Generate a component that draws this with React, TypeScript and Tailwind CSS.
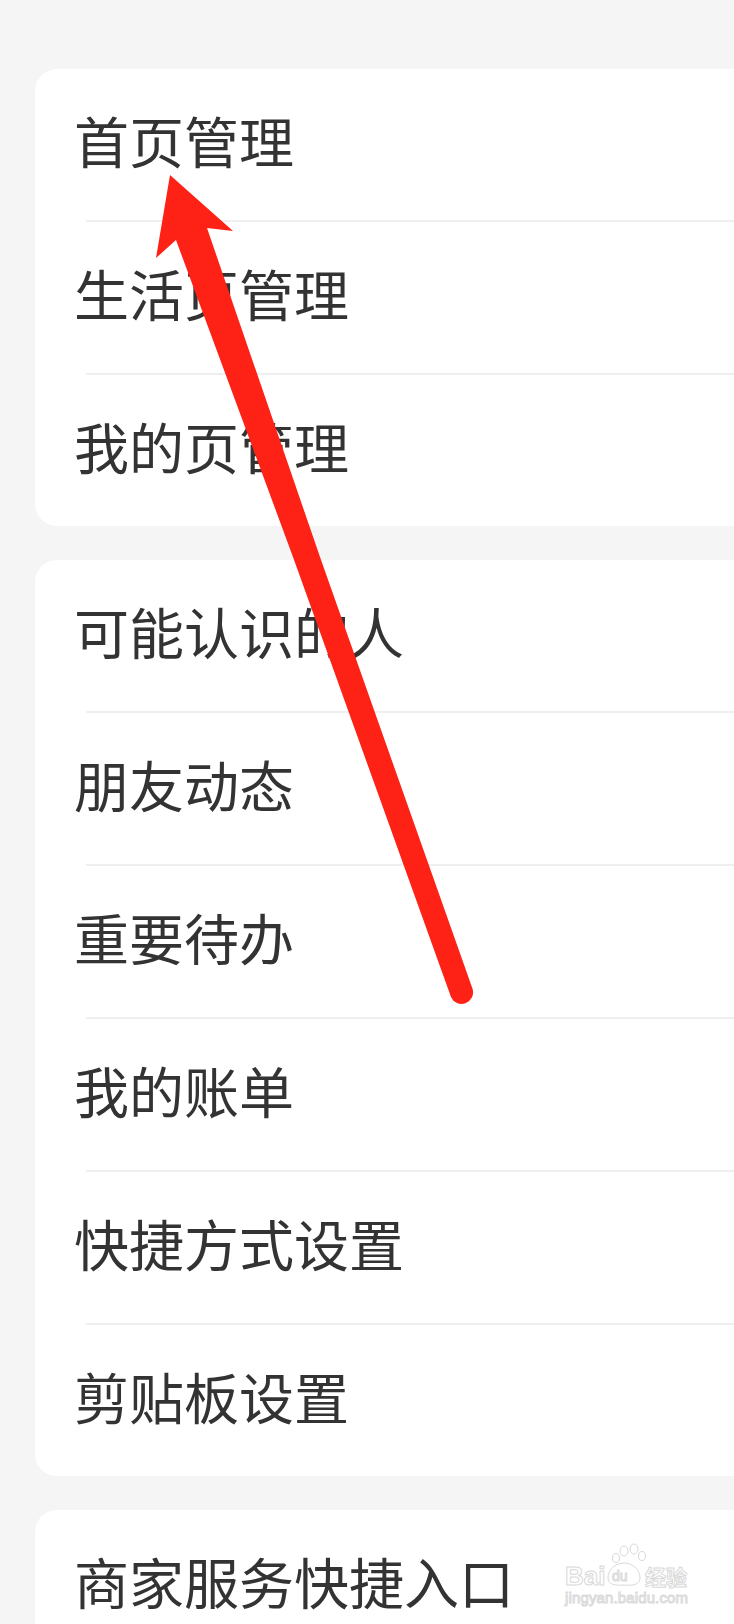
import React from 'react';

const cards: string[][] = [
  ['首页管理', '生活页管理', '我的页管理'],
  ['可能认识的人', '朋友动态', '重要待办', '我的账单', '快捷方式设置', '剪贴板设置'],
  ['商家服务快捷入口'],
];

const font = '"Noto Sans CJK SC", "Noto Sans", sans-serif';

const Row: React.FC<{ label: string; last: boolean }> = ({ label, last }) => {
  return (
    <>
      <div className="h-[151px] flex items-center pl-[39px] pb-[10px]">
        <span className="text-[55px] leading-none text-[#333333]">{label}</span>
      </div>
      {!last ? <div className="ml-[51px] h-[2px] bg-[#efefef]"></div> : null}
    </>
  );
};

const Watermark = () => {
  return (
    <svg
      className="absolute left-[555px] top-[1538px]"
      width="150"
      height="72"
      viewBox="0 0 150 72"
      fill="#ffffff"
      stroke="#d9d9d9"
      strokeWidth="1"
      aria-hidden="true"
    >
      <text x="10" y="47" fontSize="26" fontFamily="Liberation Sans, sans-serif" fontWeight="700">
        Bai
      </text>
      <ellipse cx="61" cy="20" rx="3.5" ry="4.5" />
      <ellipse cx="69" cy="13" rx="4" ry="5" />
      <ellipse cx="79" cy="11" rx="4" ry="5" />
      <ellipse cx="87" cy="18" rx="3.5" ry="4.5" />
      <path d="M53 40 C53 30 62 25 69 25 C77 25 85 31 85 40 C85 46 79 48 69 47 C59 48 53 46 53 40 Z" />
      <text x="57" y="43" fontSize="14" fontFamily="Liberation Sans, sans-serif">
        du
      </text>
      <text x="90" y="47" fontSize="21" fontFamily='"Noto Sans CJK SC", sans-serif' fontWeight="700">
        经验
      </text>
      <text x="10" y="65" fontSize="15" fontFamily="Liberation Sans, sans-serif" textLength="123">
        jingyan.baidu.com
      </text>
    </svg>
  );
};

const Arrow = () => {
  return (
    <svg
      className="absolute left-0 top-0 pointer-events-none"
      width="734"
      height="1624"
      viewBox="0 0 734 1624"
    >
      <path
        d="M170 175 L233 231 L207 228 L320 557 L472.6 989.1 A11.5 11.5 0 0 1 451 996.9 L293 557 L176 240 L156 258 Z"
        fill="#fe2116"
      />
    </svg>
  );
};

export default function App() {
  return (
    <div
      className="relative w-[734px] h-[1624px] overflow-hidden bg-[#f5f5f5] pt-[69px] pl-[35px]"
      style={{ fontFamily: font }}
    >
      <div className="flex flex-col gap-[34px]">
        {cards.map((rows, i) => (
          <div key={i} className="bg-white rounded-l-[22px] flex flex-col">
            {rows.map((r, j) => (
              <Row key={j} label={r} last={j === rows.length - 1} />
            ))}
          </div>
        ))}
      </div>
      <Watermark />
      <Arrow />
    </div>
  );
}
